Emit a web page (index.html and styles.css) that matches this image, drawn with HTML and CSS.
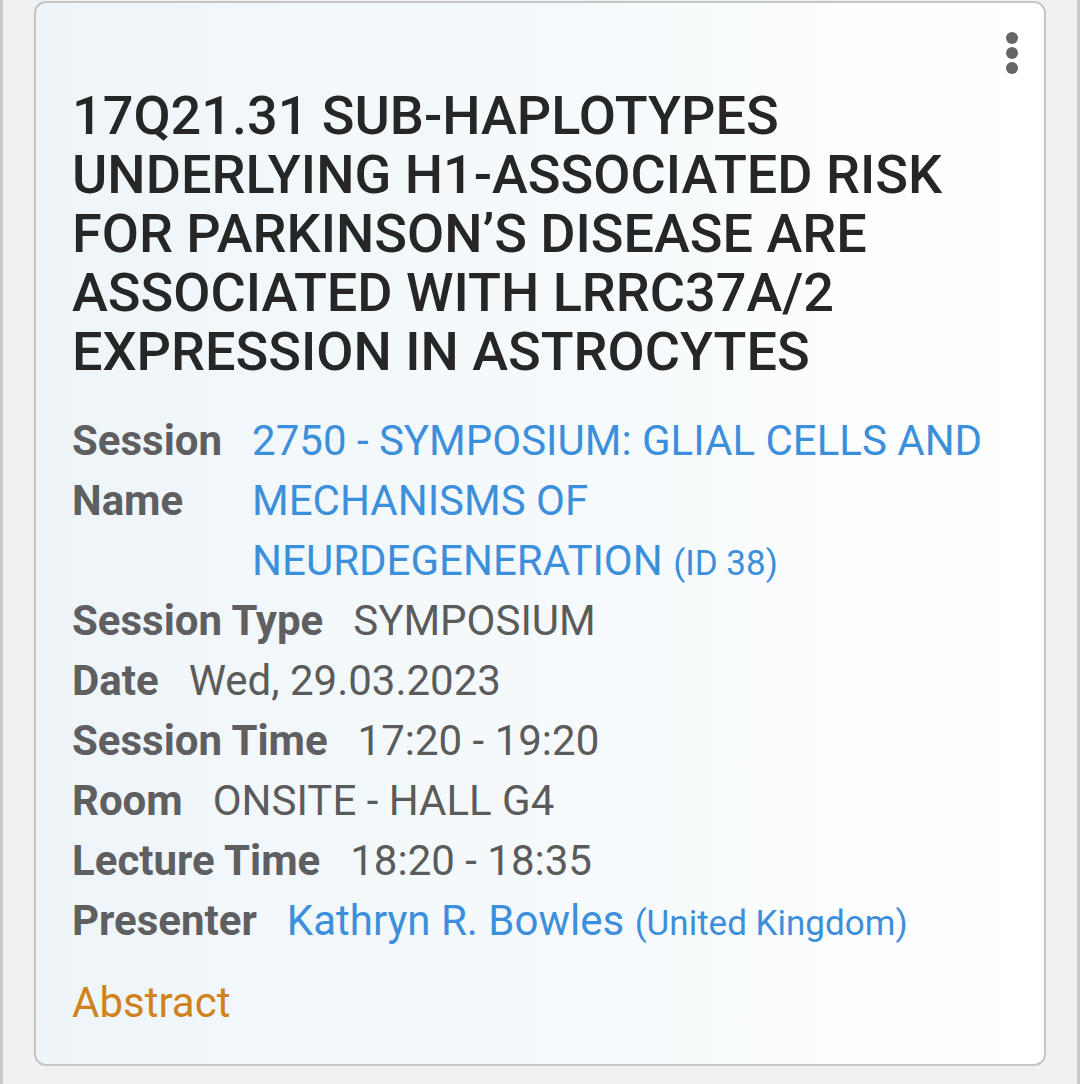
FILE: index.html
```html
<!DOCTYPE html>
<html lang="en">
<head>
<meta charset="utf-8">
<link rel="stylesheet" href="styles.css">
</head>
<body>
<div class="page">
  <article class="card">
    <button class="menu" aria-label="More">
      <svg width="16" height="44" viewBox="0 0 16 44"><circle cx="8" cy="7" r="6"/><circle cx="8" cy="22" r="6"/><circle cx="8" cy="37" r="6"/></svg>
    </button>
    <h1 class="title">17Q21.31 SUB-HAPLOTYPES UNDERLYING H1-ASSOCIATED RISK FOR PARKINSON’S DISEASE ARE ASSOCIATED WITH LRRC37A/2 EXPRESSION IN ASTROCYTES</h1>
    <div class="details">
      <div class="row"><span class="label label-narrow">Session Name</span><span class="value link">2750 - SYMPOSIUM: GLIAL CELLS AND MECHANISMS OF NEURDEGENERATION <small>(ID 38)</small></span></div>
      <div class="row"><span class="label">Session Type</span><span class="value">SYMPOSIUM</span></div>
      <div class="row"><span class="label">Date</span><span class="value">Wed, 29.03.2023</span></div>
      <div class="row"><span class="label">Session Time</span><span class="value">17:20 - 19:20</span></div>
      <div class="row"><span class="label">Room</span><span class="value">ONSITE - HALL G4</span></div>
      <div class="row"><span class="label">Lecture Time</span><span class="value">18:20 - 18:35</span></div>
      <div class="row"><span class="label">Presenter</span><span class="value link">Kathryn R. Bowles <small>(United Kingdom)</small></span></div>
    </div>
    <a class="abstract">Abstract</a>
  </article>
</div>
</body>
</html>
```

FILE: styles.css
```css
html, body {
  margin: 0;
  padding: 0;
  background: #f1f1f1;
}
body {
  font-family: Roboto, "Noto Sans", "Liberation Sans", sans-serif;
  width: 1080px;
  height: 1084px;
  overflow: hidden;
}
.page {
  box-sizing: border-box;
  height: 1084px;
  border-left: 3px solid #c9c9c9;
  border-right: 3px solid #c9c9c9;
  padding: 1px 31px 0 31px;
}
.card {
  position: relative;
  box-sizing: border-box;
  height: 1065px;
  border: 2px solid #c6c6c6;
  border-radius: 12px;
  background: linear-gradient(to right, #eef5f9 0%, #f6fafc 55%, #ffffff 100%);
  padding: 83px 50px 0 36px;
}
.menu {
  position: absolute;
  top: 28px;
  right: 24px;
  border: 0;
  background: none;
  padding: 0;
  line-height: 0;
}
.menu svg { fill: #666666; }
.title {
  margin: 0;
  font-weight: 500;
  font-size: 54px;
  line-height: 59px;
  color: #262626;
  text-transform: uppercase;
}
.details {
  margin-top: 30px;
}
.row {
  display: flex;
  gap: 30px;
  font-size: 42px;
  line-height: 60px;
}
.label {
  font-weight: 700;
  color: #5f5f61;
  flex: 0 0 auto;
}
.label-narrow {
  width: min-content;
}
.value {
  color: #5b5b5b;
}
.link {
  color: #3c8fdb;
}
.link small {
  font-size: 35px;
  line-height: 1;
}
.abstract {
  display: block;
  margin-top: 22px;
  font-size: 42px;
  line-height: 60px;
  color: #d0821c;
}
```
